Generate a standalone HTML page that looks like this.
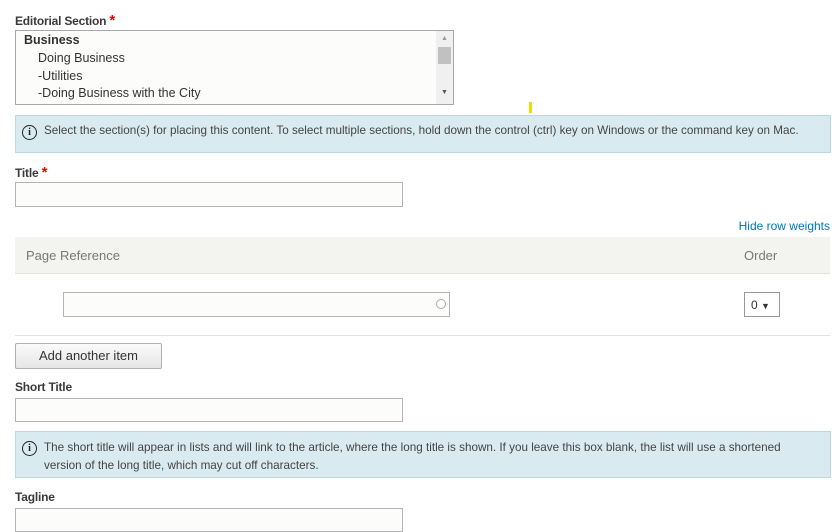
<!DOCTYPE html>
<html><head><style>
body{margin:0;width:832px;height:523px;overflow:hidden;background:#fff;font-family:"Liberation Sans",sans-serif;color:#333;position:relative}
.a{position:absolute}
.lbl{font-size:12px;font-weight:bold;color:#3a3a3a;letter-spacing:-0.2px}
.req{color:#e00;font-size:15px}
.inp{position:absolute;background:#fcfcfa;border:1px solid #b4b4b4;box-sizing:border-box}
.info{position:absolute;left:15px;width:816px;background:#d9ebf0;border:1px solid #bfd7de;box-sizing:border-box;font-size:11.7px;color:#444}
.ic{position:absolute;left:6px;width:13px;height:13px;border:1.5px solid #222;border-radius:50%;font:bold 10px/13px "Liberation Serif",serif;text-align:center;color:#222}
</style></head><body>
<div class="a lbl" style="left:15px;top:12px">Editorial Section <span class="req">*</span></div>
<div class="inp" style="left:15px;top:30px;width:439px;height:75px;border-color:#a8a8a8"></div>
<div class="a" style="left:24px;top:33px;font-size:12.5px;font-weight:bold;color:#333">Business</div>
<div class="a" style="left:38px;top:51px;font-size:12.5px">Doing Business</div>
<div class="a" style="left:38px;top:69px;font-size:12.5px">-Utilities</div>
<div class="a" style="left:38px;top:86px;font-size:12.5px">-Doing Business with the City</div>
<div class="a" style="left:436px;top:31px;width:17px;height:73px;background:#f0f0f0"></div>
<div class="a" style="left:438px;top:47px;width:13px;height:17px;background:#c1c1c1"></div>
<div class="a" style="left:441px;top:35px;font-size:7px;color:#999">▲</div>
<div class="a" style="left:441px;top:89px;font-size:7px;color:#555">▼</div>
<div class="a" style="left:529px;top:102px;width:3px;height:11px;background:#f5d800"></div>
<div class="info" style="top:115px;height:38px"><div class="ic" style="top:9px">i</div><div class="a" style="left:28px;top:8px;white-space:nowrap">Select the section(s) for placing this content. To select multiple sections, hold down the control (ctrl) key on Windows or the command key on Mac.</div></div>
<div class="a lbl" style="left:15px;top:164px">Title <span class="req">*</span></div>
<div class="inp" style="left:15px;top:182px;width:388px;height:25px"></div>
<div class="a" style="right:2px;top:219px;font-size:12px;color:#0074bd">Hide row weights</div>
<div class="a" style="left:15px;top:237px;width:815px;height:36px;background:#f3f3ef;border-bottom:1px solid #e2e2de"></div>
<div class="a" style="left:26px;top:248px;font-size:13px;color:#777">Page Reference</div>
<div class="a" style="left:744px;top:248px;font-size:13px;color:#777">Order</div>
<div class="inp" style="left:63px;top:292px;width:387px;height:25px"></div>
<div class="a" style="left:436px;top:299px;width:8px;height:8px;border:1px solid #aaa;border-radius:50%"></div>
<div class="inp" style="left:744px;top:292px;width:36px;height:25px;background:#fff;border-color:#999;font-size:12px;padding:5px 0 0 6px">0 <span style="font-size:9px">▼</span></div>
<div class="a" style="left:15px;top:335px;width:815px;height:1px;background:#e2e2de"></div>
<div class="a" style="left:15px;top:343px;width:147px;height:26px;box-sizing:border-box;border:1px solid #b0b0b0;border-radius:2px;background:linear-gradient(#fafafa,#e6e6e6);font-size:13px;text-align:center;line-height:24px;color:#333">Add another item</div>
<div class="a lbl" style="left:15px;top:380px">Short Title</div>
<div class="inp" style="left:15px;top:398px;width:388px;height:24px"></div>
<div class="info" style="top:431px;height:47px"><div class="ic" style="top:9px">i</div><div class="a" style="left:28px;top:7px;width:748px;line-height:18px">The short title will appear in lists and will link to the article, where the long title is shown. If you leave this box blank, the list will use a shortened version of the long title, which may cut off characters.</div></div>
<div class="a lbl" style="left:15px;top:490px">Tagline</div>
<div class="inp" style="left:15px;top:508px;width:388px;height:24px"></div>
</body></html>
